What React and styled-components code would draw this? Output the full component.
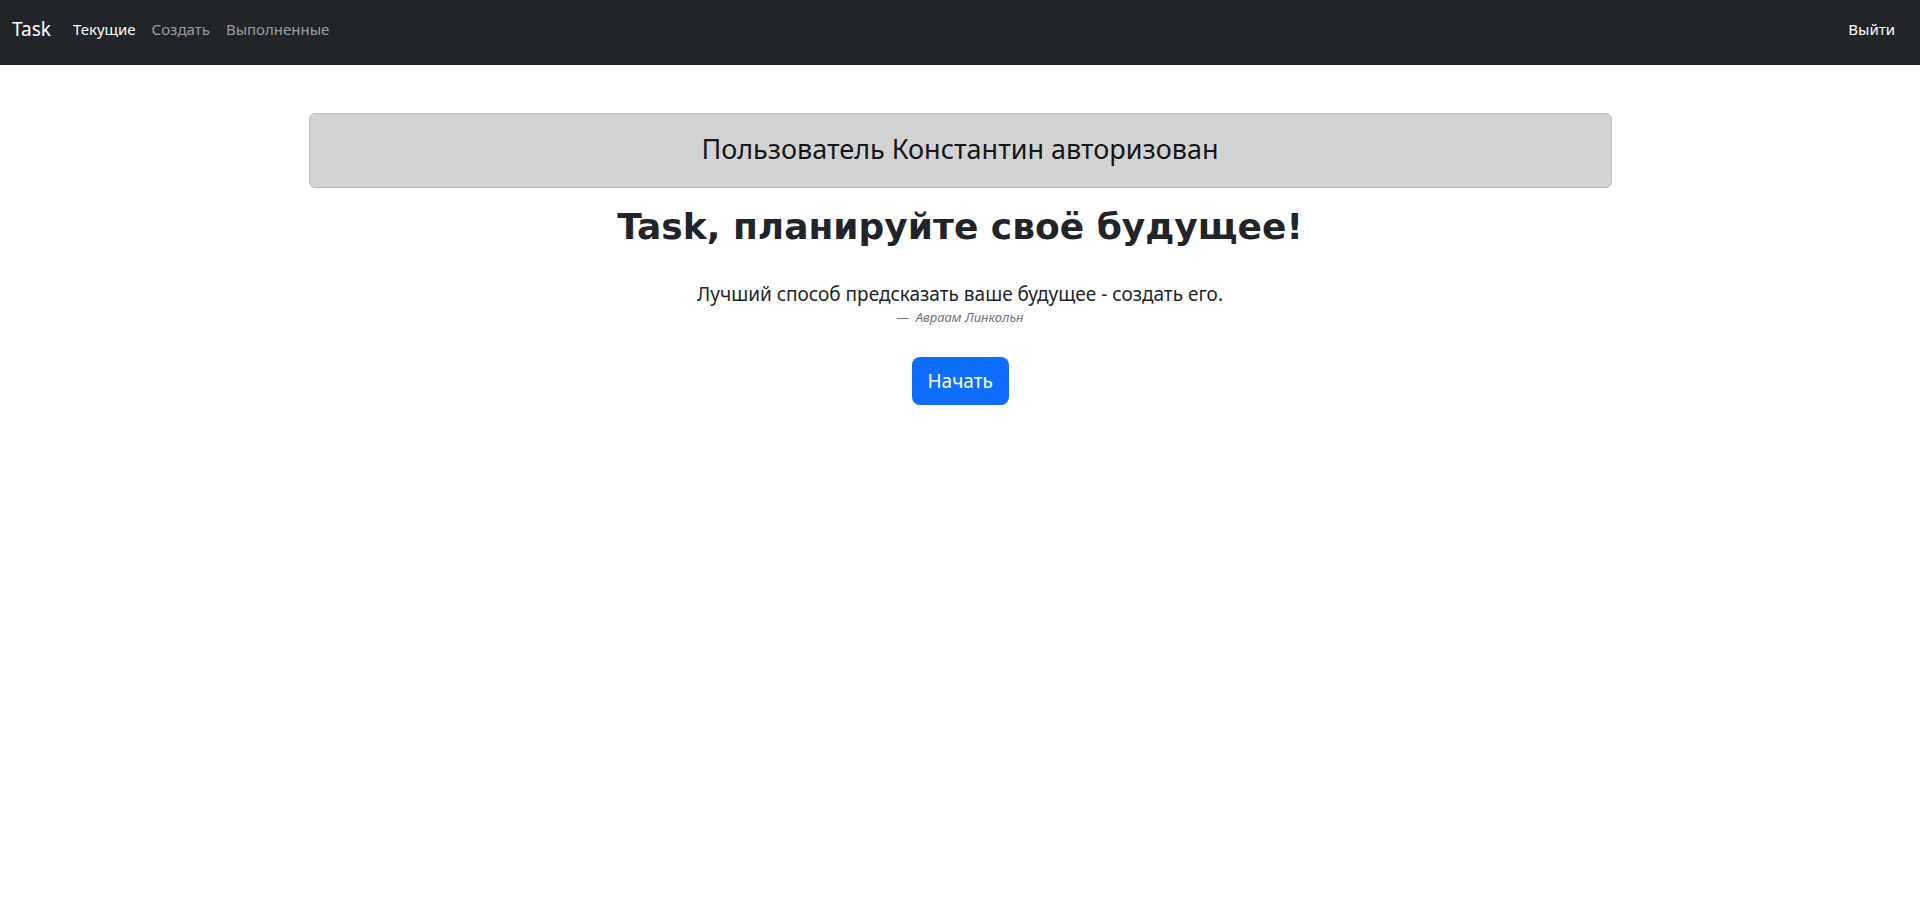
import React from 'react';
import styled, {createGlobalStyle} from "styled-components";

const GlobalStyle = createGlobalStyle`
body{
    margin:0;
    font-family:"Noto Sans", "Open Sans", sans-serif;
    color:#212529;
    background:#ffffff;
}
`;

export default function App() {
    return (
        <>
            <GlobalStyle/>
            <Navbar>
                <NavLeft>
                    <Brand>Task</Brand>
                    <NavLink active>Текущие</NavLink>
                    <NavLink>Создать</NavLink>
                    <NavLink>Выполненные</NavLink>
                </NavLeft>
                <NavLink active>Выйти</NavLink>
            </Navbar>
            <Container>
                <Alert>Пользователь Константин авторизован</Alert>
                <Title>Task, планируйте своё будущее!</Title>
                <Quote>
                    <QuoteText>Лучший способ предсказать ваше будущее - создать его.</QuoteText>
                    <QuoteFooter>— &nbsp;Авраам Линкольн</QuoteFooter>
                </Quote>
                <StartButton>Начать</StartButton>
            </Container>
        </>
    )
}

const Navbar = styled.nav`
height:65px;
background-color:#212529;
display:flex;
justify-content:space-between;
align-items:center;
padding:0 17px 7px 12px;
box-sizing:border-box;
`;

const NavLeft = styled.div`
display:flex;
align-items:center;
`;

const Brand = styled.a`
font-size:19px;
color:#ffffff;
margin-right:14px;
`;

const NavLink = styled.a`
font-size:15px;
padding:8px 8px;
color:${({active}) => (active ? "#ffffff" : "rgba(255,255,255,0.55)")};
cursor:pointer;
`;

const Container = styled.main`
width:1303px;
margin:48px auto 0;
display:flex;
flex-direction:column;
align-items:center;
`;

const Alert = styled.div`
width:100%;
height:75px;
box-sizing:border-box;
background-color:#d3d3d4;
border:1px solid #bcbebf;
border-radius:6px;
display:flex;
justify-content:center;
align-items:center;
padding-bottom:5px;
font-size:27px;
color:#141619;
`;

const Title = styled.h1`
font-family:"DejaVu Sans", Verdana, sans-serif;
font-weight:bold;
font-size:36px;
margin:18px 0 0;
color:#212529;
`;

const Quote = styled.figure`
margin:34px 0 0;
text-align:center;
`;

const QuoteText = styled.p`
font-size:19px;
margin:0;
`;

const QuoteFooter = styled.figcaption`
font-size:13px;
font-style:italic;
color:#6c757d;
margin-top:1px;
`;

const StartButton = styled.button`
margin-top:31px;
font-family:inherit;
font-size:19px;
color:#ffffff;
background-color:#0d6efd;
border:none;
border-radius:8px;
padding:8px 16px;
height:48px;
width:97px;
cursor:pointer;
`;
